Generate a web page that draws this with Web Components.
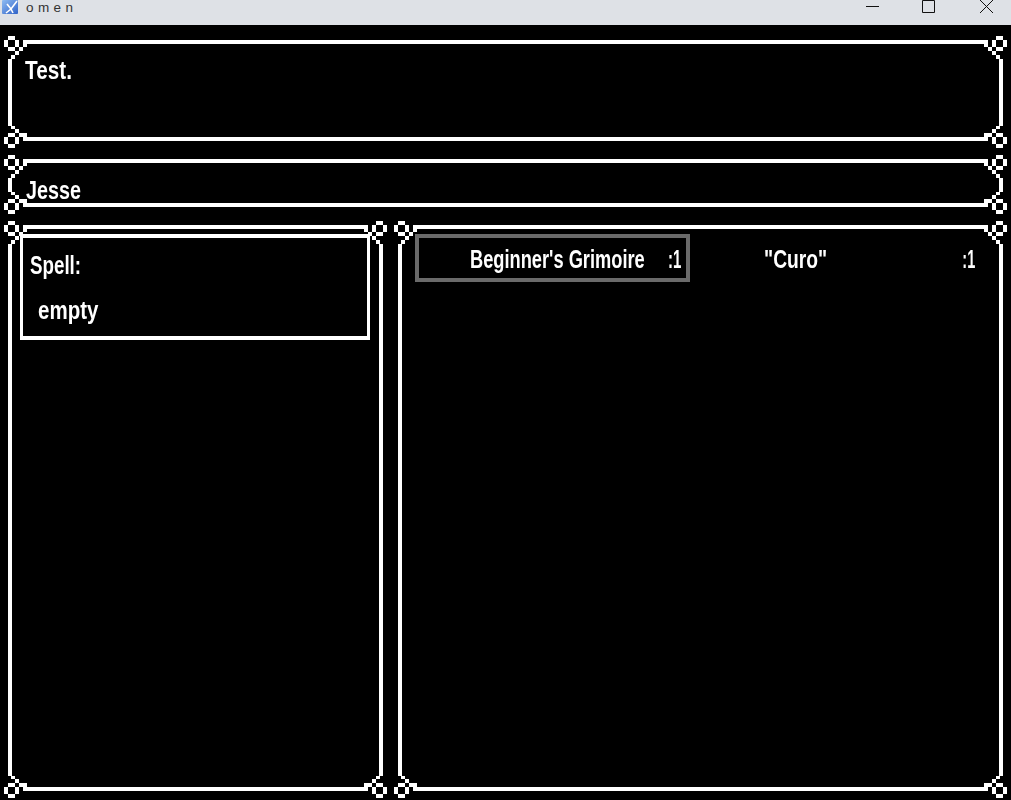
<!DOCTYPE html>
<html>
<head>
<style>
html,body{margin:0;padding:0;background:#000;}
body{width:1011px;height:800px;overflow:hidden;}
.bottom{display:flex;gap:7px;height:577px;}
</style>
</head>
<body>
<omen-window>
  <orn-frame style="height:112px"><game-text style="margin:21px 0 0 21px;--sx:.83">Test.</game-text></orn-frame>
  <orn-frame style="height:59px"><game-text style="margin:22px 0 0 22px;--sx:.79">Jesse</game-text></orn-frame>
  <div class="bottom">
    <orn-frame style="width:383px">
      <spell-box>
        <game-text style="margin:14px 0 0 7px;--sx:.75">Spell:</game-text>
        <game-text style="margin:18px 0 0 15px;--sx:.82">empty</game-text>
      </spell-box>
    </orn-frame>
    <orn-frame style="width:613px">
      <item-list>
        <inv-item selected><game-text style="--sx:.73">Beginner's Grimoire</game-text><game-text slot="count" style="--sx:.6;--ox:100%">:1</game-text></inv-item>
        <inv-item><game-text style="--sx:.77">"Curo"</game-text><game-text slot="count" style="--sx:.58;--ox:100%">:1</game-text></inv-item>
      </item-list>
    </orn-frame>
  </div>
</omen-window>
<script>
// ornaments are pixel art, top corners are 23x23, bottom corners 23x22
const cornerTop = `<svg width="23" height="23" viewBox="0 0 23 23" fill="#fff" shape-rendering="crispEdges"><path d="M4 0h7v4H4zM0 4h4v7H0zM11 4h4v7h-4zM4 11h7v4H4zM15 11h4v4h-4zM19 4h4v7h-4zM11 15h4v4h-4zM7 19h4v4H7z"/></svg>`;
const cornerBottom = `<svg width="23" height="22" viewBox="0 0 23 22" fill="#fff" shape-rendering="crispEdges"><path d="M4 7h7v4H4zM0 11h4v7H0zM11 11h4v7h-4zM4 18h7v4H4zM15 7h4v4h-4zM19 7h4v8h-4zM11 3h4v4h-4zM7 0h4v3H7z"/></svg>`;

class OrnFrame extends HTMLElement{
    constructor(){
        super();
        this.attachShadow({mode: "open"});
        this.shadowRoot.innerHTML = `
<style>
:host{display:block;position:relative;box-sizing:border-box;}
.box{position:absolute;inset:4px 4px 7px 4px;border:4px solid #fff;box-sizing:border-box;}
.c{position:absolute;background:#000;line-height:0;}
.c svg{display:block}
.tl{left:0;top:0}
.tr{right:0;top:0;transform:scaleX(-1)}
.bl{left:0;bottom:0}
.br{right:0;bottom:0;transform:scaleX(-1)}
.in{position:relative;height:100%;display:flow-root;}
</style>
<div class="box"></div>
<div class="c tl">${cornerTop}</div><div class="c tr">${cornerTop}</div>
<div class="c bl">${cornerBottom}</div><div class="c br">${cornerBottom}</div>
<div class="in"><slot></slot></div>`;
    }
}
customElements.define("orn-frame", OrnFrame);

// the game's bitmap font is much narrower than anything installed, so squeeze it
class GameText extends HTMLElement{
    constructor(){
        super();
        this.attachShadow({mode: "open"});
        this.shadowRoot.innerHTML = `<style>:host{display:block;white-space:nowrap;transform:scaleX(var(--sx,.8));transform-origin:var(--ox,0) 0;filter:blur(.3px);}</style><slot></slot>`;
    }
}
customElements.define("game-text", GameText);

class SpellBox extends HTMLElement{
    constructor(){
        super();
        this.attachShadow({mode: "open"});
        this.shadowRoot.innerHTML = `
<style>
:host{display:flow-root;box-sizing:border-box;width:350px;height:106px;margin:13px 0 0 16px;border:4px solid #fff;border-width:4px 3px 4px 3px;}
</style>
<slot></slot>`;
    }
}
customElements.define("spell-box", SpellBox);

class ItemList extends HTMLElement{
    constructor(){
        super();
        this.attachShadow({mode: "open"});
        this.shadowRoot.innerHTML = `
<style>
:host{display:grid;grid-template-columns:275px 275px;column-gap:19px;margin:13px 0 0 21px;}
</style>
<slot></slot>`;
    }
}
customElements.define("item-list", ItemList);

class InvItem extends HTMLElement{
    constructor(){
        super();
        this.attachShadow({mode: "open"});
        this.shadowRoot.innerHTML = `
<style>
:host{display:grid;grid-template-columns:1fr auto;box-sizing:border-box;height:48px;padding:3px 5px 0 51px;align-items:center;border:4px solid transparent;}
:host([selected]){border-color:#6a6a6a;}
.name{min-width:0;}
</style>
<div class="name"><slot></slot></div><slot name="count"></slot>`;
    }
}
customElements.define("inv-item", InvItem);

class OmenWindow extends HTMLElement{
    constructor(){
        super();
        this.attachShadow({mode: "open"});
        this.shadowRoot.innerHTML = `
<style>
:host{display:block;width:1011px;height:800px;background:#000;color:#fff;font:700 25px/27px "Liberation Sans",sans-serif;}
.bar{height:25px;background:#dee1e6;display:flex;align-items:flex-start;}
.app{margin:0 8px 0 2px;display:block}
.title{letter-spacing:4.4px;color:#333;font:400 13.5px/15px "Liberation Sans",sans-serif;}
.btns{margin-left:auto;}
.btns svg{display:block}
.page{padding:11px 4px 0;display:flex;flex-direction:column;gap:7px;}
</style>
<div class="bar">
  <svg class="app" width="16" height="14" viewBox="0 0 16 14"><defs><linearGradient id="g" x1="0" y1="0" x2="1" y2="1"><stop offset="0" stop-color="#8fbcf2"/><stop offset="1" stop-color="#2f62c8"/></linearGradient></defs><rect width="16" height="14" rx="1" fill="url(#g)"/><path d="M5 4l4 5 6-8M9 9l-5 4M9 9l2 4" fill="none" stroke="#fff" stroke-width="1.6"/></svg>
  <span class="title">omen</span>
  <div class="btns">
    <svg width="154" height="25" fill="none" stroke="#111" stroke-width="1"><path d="M9 6.5h13M65.5 .5h12v12h-12zM123 0l13 13M136 0l-13 13"/></svg>
  </div>
</div>
<div class="page"><slot></slot></div>`;
    }
}
customElements.define("omen-window", OmenWindow);
</script>
</body>
</html>
